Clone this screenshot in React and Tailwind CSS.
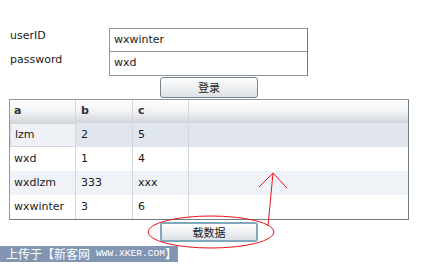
export default function App() {
  const rows = [
    ["lzm", "2", "5"],
    ["wxd", "1", "4"],
    ["wxdlzm", "333", "xxx"],
    ["wxwinter", "3", "6"],
  ];
  const rowBg = ["bg-[#e1e6ee]", "bg-white", "bg-[#eff2f7]", "bg-white"];

  return (
    <div
      className="relative w-[448px] h-[265px] bg-white overflow-hidden text-[11px] text-[#1a1a1a]"
      style={{ fontFamily: '"DejaVu Sans", Verdana, sans-serif' }}
    >
      <div className="pt-[28px]">
        <div className="flex">
          <div className="w-[109px] pl-[10px] pt-[1px] leading-[14px]">userID</div>
          <div className="w-[199px] h-[24px] border border-[#8a96a2] border-r-[#6a7682] flex items-center pl-[4px]">
            wxwinter
          </div>
        </div>
        <div className="flex">
          <div className="w-[109px] pl-[10px] pt-[1px] leading-[14px]">password</div>
          <div className="w-[199px] h-[24px] border border-t-0 border-[#8a96a2] border-r-[#6a7682] flex items-center pl-[4px]">
            wxd
          </div>
        </div>

        <div className="ml-[160px] mt-[1px] w-[98px] h-[21px] rounded-[3px] border border-[#7a848e] bg-gradient-to-b from-white to-[#dde1e6] flex items-center justify-center text-[11px]"
          style={{ fontFamily: '"Noto Sans CJK SC", sans-serif' }}
        >
          登录
        </div>

        <div className="ml-[9px] mt-[1px] w-[400px] border border-[#8d98a3] border-r-[#6f7b87] border-b-[#6f7b87]">
          <div className="grid grid-cols-[66px_57px_56px_1fr] h-[23px] bg-gradient-to-b from-white via-[#f1f2f4] to-[#d3d6da] font-bold text-[#333]">
            <div className="pl-[4px] flex items-center border-r border-[#d3d6da]">a</div>
            <div className="pl-[5px] flex items-center border-r border-[#d3d6da]">b</div>
            <div className="pl-[5px] flex items-center border-r border-[#d3d6da]">c</div>
            <div />
          </div>
          {rows.map((r, i) => (
            <div key={i} className={`grid grid-cols-[66px_57px_56px_1fr] h-[24px] ${rowBg[i]}`}>
              <div
                className={`pl-[4px] flex items-center border-r border-[#d3d6da] ${
                  i === 0 ? "border border-[#74c2d6] bg-[#eef1f5]" : ""
                }`}
              >
                {r[0]}
              </div>
              <div className="pl-[5px] flex items-center border-r border-[#d3d6da]">{r[1]}</div>
              <div className="pl-[5px] flex items-center border-r border-[#d3d6da]">{r[2]}</div>
              <div />
            </div>
          ))}
        </div>

        <div
          className="ml-[160px] mt-[2px] w-[98px] h-[20px] rounded-[3px] border-2 border-[#7fa8ba] bg-gradient-to-b from-white to-[#dde1e6] flex items-center justify-center text-[11px]"
          style={{ fontFamily: '"Noto Sans CJK SC", sans-serif' }}
        >
          载数据
        </div>

        <div className="mt-[4px] w-[178px] h-[16px] bg-[#8296b4] text-white pl-[6px] whitespace-nowrap flex items-center">
          <span className="text-[12px] leading-[16px]" style={{ fontFamily: '"Noto Sans CJK SC", sans-serif' }}>
            上传于【新客网
          </span>
          <span className="text-[9.6px] leading-[16px] pl-[6px]" style={{ fontFamily: '"Liberation Mono", monospace' }}>
            WWW.XKER.COM
          </span>
          <span className="text-[12px] leading-[16px]" style={{ fontFamily: '"Noto Sans CJK SC", sans-serif' }}>
            】
          </span>
        </div>
      </div>

      <svg className="absolute left-0 top-0 pointer-events-none" width="448" height="265">
        <ellipse cx="211" cy="232" rx="63" ry="16" fill="none" stroke="#e8141c" strokeWidth="1" />
        <polyline points="268,226 273,173" fill="none" stroke="#e8141c" strokeWidth="1" />
        <polyline points="259,187 273,173 287,188" fill="none" stroke="#e8141c" strokeWidth="1" />
      </svg>
    </div>
  );
}
